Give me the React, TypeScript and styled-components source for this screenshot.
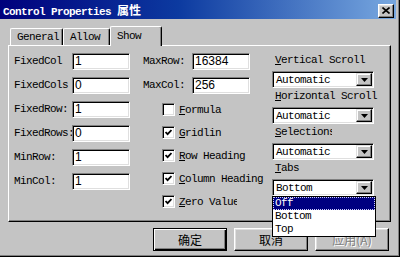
import styled, { createGlobalStyle } from "styled-components";

const GlobalStyle = createGlobalStyle`
  html, body {
    margin: 0;
    padding: 0;
    background: #c4c4c4;
  }
  body {
    width: 400px;
    height: 257px;
    overflow: hidden;
  }
`;

const mono = `"Liberation Mono", "Noto Sans CJK SC", monospace`;

const Window = styled.div`
  position: relative;
  width: 400px;
  height: 257px;
  box-sizing: border-box;
  background: #c4c4c4;
  border-right: 1px solid #000;
  border-bottom: 1px solid #000;
  box-shadow: inset -1px -1px #808080;
  font-family: ${mono};
  font-size: 11px;
  letter-spacing: -0.6px;
  color: #000;
  display: flex;
  flex-direction: column;
`;

const TitleBar = styled.div`
  height: 19px;
  margin-right: 3px;
  padding: 0 2px 0 3px;
  background: linear-gradient(to right, #00007c 0%, #0c3aa0 45%, #78a8e0 100%);
  display: flex;
  align-items: center;
  justify-content: space-between;
`;

const TitleText = styled.div`
  color: #fff;
  font-weight: bold;
  white-space: nowrap;
`;

const Cjk = styled.span`
  font-family: "Noto Sans CJK SC", sans-serif;
  font-size: 12px;
  letter-spacing: 0;
`;

const CloseButton = styled.div`
  width: 16px;
  height: 14px;
  margin-top: 2px;
  box-sizing: border-box;
  background: #c4c4c4;
  border: 1px solid;
  border-color: #fff #000 #000 #fff;
  box-shadow: inset -1px -1px #808080, inset 1px 1px #dfdfdf;
  display: flex;
  align-items: center;
  justify-content: center;
`;

const Body = styled.div`
  padding: 7px 8px 0 8px;
  display: flex;
  flex-direction: column;
`;

const TabRow = styled.div`
  height: 19px;
  padding-left: 2px;
  display: flex;
  align-items: flex-end;
`;

const Tab = styled.div<{ $active?: boolean; $w: number }>`
  position: relative;
  z-index: ${(p) => (p.$active ? 2 : 1)};
  width: ${(p) => p.$w}px;
  height: ${(p) => (p.$active ? 20 : 17)}px;
  margin-bottom: ${(p) => (p.$active ? -1 : 0)}px;
  box-sizing: border-box;
  padding-left: 6px;
  padding-top: ${(p) => (p.$active ? 3 : 2)}px;
  background: #c4c4c4;
  border-top: 1px solid #fff;
  border-left: 1px solid #fff;
  border-right: 1px solid #000;
  border-radius: 2px 2px 0 0;
  box-shadow: inset -1px 0 #808080;
  white-space: nowrap;
`;

const Panel = styled.div`
  position: relative;
  z-index: 1;
  height: 177px;
  box-sizing: border-box;
  border: 1px solid;
  border-color: #fff #000 #000 #fff;
  box-shadow: inset -1px -1px #808080;
  padding: 7px 0 0 5px;
  display: flex;
`;

const LeftColumn = styled.div`
  width: 116px;
  display: flex;
  flex-direction: column;
  gap: 7px;
`;

const MiddleColumn = styled.div`
  width: 107px;
  margin-left: 13px;
  display: flex;
  flex-direction: column;
  gap: 7px;
`;

const RightColumn = styled.div`
  width: 102px;
  margin-left: 22px;
  display: flex;
  flex-direction: column;
  gap: 1px;
`;

const FieldRow = styled.div`
  height: 17px;
  display: flex;
  align-items: center;
`;

const FieldLabel = styled.div<{ $w: number }>`
  width: ${(p) => p.$w}px;
  flex: none;
  overflow: hidden;
  white-space: nowrap;
  line-height: 17px;
`;

const TextInput = styled.div`
  width: 58px;
  height: 17px;
  flex: none;
  box-sizing: border-box;
  background: #fff;
  border: 1px solid;
  border-color: #808080 #fff #fff #808080;
  box-shadow: inset 1px 1px #000, inset -1px -1px #dfdfdf;
  padding-left: 2px;
  font-family: "Liberation Sans", sans-serif;
  font-size: 12px;
  letter-spacing: 0;
  line-height: 15px;
`;

const CheckList = styled.div`
  margin: 2px 0 0 19px;
  display: flex;
  flex-direction: column;
  gap: 10px;
`;

const CheckRow = styled.div`
  height: 13px;
  display: flex;
  align-items: center;
`;

const Box = styled.div`
  width: 13px;
  height: 13px;
  flex: none;
  box-sizing: border-box;
  background: #fff;
  border: 1px solid;
  border-color: #808080 #fff #fff #808080;
  box-shadow: inset 1px 1px #000, inset -1px -1px #dfdfdf;
  display: flex;
  align-items: center;
  justify-content: center;
`;

const CheckText = styled.div<{ $clip?: boolean }>`
  flex: none;
  margin-left: 4px;
  white-space: nowrap;
  overflow: ${(p) => (p.$clip ? "hidden" : "visible")};
  width: ${(p) => (p.$clip ? "58px" : "auto")};
`;

const Key = styled.span`
  text-decoration: underline;
`;

const Group = styled.div`
  position: relative;
  display: flex;
  flex-direction: column;
`;

const GroupLabel = styled.div<{ $clip?: boolean }>`
  height: 14px;
  line-height: 14px;
  margin-bottom: 4px;
  padding-left: 3px;
  width: 57px;
  white-space: nowrap;
  overflow: ${(p) => (p.$clip ? "hidden" : "visible")};
`;

const Select = styled.div`
  width: 102px;
  height: 17px;
  box-sizing: border-box;
  background: #fff;
  border: 1px solid;
  border-color: #808080 #fff #fff #808080;
  box-shadow: inset 1px 1px #000, inset -1px -1px #dfdfdf;
  padding: 1px 1px 1px 3px;
  display: flex;
  align-items: center;
  justify-content: space-between;
`;

const DropButton = styled.div`
  width: 16px;
  height: 13px;
  box-sizing: border-box;
  background: #c4c4c4;
  border: 1px solid;
  border-color: #dfdfdf #000 #000 #dfdfdf;
  box-shadow: inset -1px -1px #808080, inset 1px 1px #fff;
  display: flex;
  align-items: center;
  justify-content: center;
`;

const DropList = styled.div`
  position: absolute;
  top: 100%;
  left: 0;
  z-index: 5;
  width: 104px;
  box-sizing: border-box;
  background: #fff;
  border: 1px solid #000;
`;

const DropItem = styled.div<{ $selected?: boolean }>`
  height: 13px;
  line-height: 13px;
  padding-left: 2px;
  box-sizing: border-box;
  background: ${(p) => (p.$selected ? "#000080" : "#fff")};
  color: ${(p) => (p.$selected ? "#fff" : "#000")};
  outline: ${(p) => (p.$selected ? "1px dotted #d0d0ff" : "none")};
  outline-offset: -1px;
`;

const ButtonRow = styled.div`
  margin-top: 6px;
  margin-right: 2px;
  display: flex;
  justify-content: flex-end;
  gap: 7px;
`;

const Button = styled.div<{ $default?: boolean; $disabled?: boolean }>`
  width: 74px;
  height: 23px;
  box-sizing: border-box;
  background: #c4c4c4;
  border: 1px solid;
  border-color: ${(p) => (p.$default ? "#000" : "#fff #000 #000 #fff")};
  box-shadow: ${(p) =>
    p.$default
      ? "inset 1px 1px #fff, inset -1px -1px #000, inset -2px -2px #808080"
      : "inset -1px -1px #808080, inset 1px 1px #dfdfdf"};
  display: flex;
  align-items: center;
  justify-content: center;
  font-family: "Noto Sans CJK SC", sans-serif;
  font-size: 12px;
  letter-spacing: 0;
  color: ${(p) => (p.$disabled ? "#808080" : "#000")};
  text-shadow: ${(p) => (p.$disabled ? "1px 1px #fff" : "none")};
`;

const Arrow = () => (
  <svg width="7" height="4" viewBox="0 0 7 4">
    <path d="M0 0h7L3.5 4z" fill="#000" />
  </svg>
);

const Check = () => (
  <svg width="7" height="7" viewBox="0 0 7 7">
    <path d="M0.5 3 L2.6 5.2 L6.5 1" stroke="#000" strokeWidth="1.8" fill="none" />
  </svg>
);

const fields = [
  { label: "FixedCol", value: "1" },
  { label: "FixedCols", value: "0" },
  { label: "FixedRow:", value: "1" },
  { label: "FixedRows:", value: "0" },
  { label: "MinRow:", value: "1" },
  { label: "MinCol:", value: "1" },
];

const checks = [
  { key: "F", rest: "ormula", on: false },
  { key: "G", rest: "ridlin", on: true },
  { key: "R", rest: "ow Heading", on: true },
  { key: "C", rest: "olumn Heading", on: true },
  { key: "Z", rest: "ero Value", on: true, clip: true },
];

const selects = [
  { key: "V", rest: "ertical Scroll", value: "Automatic" },
  { key: "H", rest: "orizontal Scroll", value: "Automatic" },
  { key: "S", rest: "elections", value: "Automatic", clip: true },
];

export default function App() {
  return (
    <>
      <GlobalStyle />
      <Window>
        <TitleBar>
          <TitleText>
            Control Properties <Cjk>属性</Cjk>
          </TitleText>
          <CloseButton>
            <svg width="8" height="7" viewBox="0 0 8 7">
              <path d="M0.5 0.5 L7.5 6.5 M7.5 0.5 L0.5 6.5" stroke="#000" strokeWidth="1.6" />
            </svg>
          </CloseButton>
        </TitleBar>
        <Body>
          <TabRow>
            <Tab $w={53}>General</Tab>
            <Tab $w={47}>Allow</Tab>
            <Tab $w={52} $active>
              Show
            </Tab>
          </TabRow>
          <Panel>
            <LeftColumn>
              {fields.map((f) => (
                <FieldRow key={f.label}>
                  <FieldLabel $w={58}>{f.label}</FieldLabel>
                  <TextInput>{f.value}</TextInput>
                </FieldRow>
              ))}
            </LeftColumn>
            <MiddleColumn>
              <FieldRow>
                <FieldLabel $w={49}>MaxRow:</FieldLabel>
                <TextInput>16384</TextInput>
              </FieldRow>
              <FieldRow>
                <FieldLabel $w={49}>MaxCol:</FieldLabel>
                <TextInput>256</TextInput>
              </FieldRow>
              <CheckList>
                {checks.map((c) => (
                  <CheckRow key={c.key}>
                    <Box>{c.on && <Check />}</Box>
                    <CheckText $clip={c.clip}>
                      <Key>{c.key}</Key>
                      {c.rest}
                    </CheckText>
                  </CheckRow>
                ))}
              </CheckList>
            </MiddleColumn>
            <RightColumn>
              {selects.map((s) => (
                <Group key={s.key}>
                  <GroupLabel $clip={s.clip}>
                    <Key>{s.key}</Key>
                    {s.rest}
                  </GroupLabel>
                  <Select>
                    {s.value}
                    <DropButton>
                      <Arrow />
                    </DropButton>
                  </Select>
                </Group>
              ))}
              <Group>
                <GroupLabel>
                  <Key>T</Key>abs
                </GroupLabel>
                <Select>
                  Bottom
                  <DropButton>
                    <Arrow />
                  </DropButton>
                </Select>
                <DropList>
                  <DropItem $selected>Off</DropItem>
                  <DropItem>Bottom</DropItem>
                  <DropItem>Top</DropItem>
                </DropList>
              </Group>
            </RightColumn>
          </Panel>
          <ButtonRow>
            <Button $default>确定</Button>
            <Button>取消</Button>
            <Button $disabled>应用(A)</Button>
          </ButtonRow>
        </Body>
      </Window>
    </>
  );
}
